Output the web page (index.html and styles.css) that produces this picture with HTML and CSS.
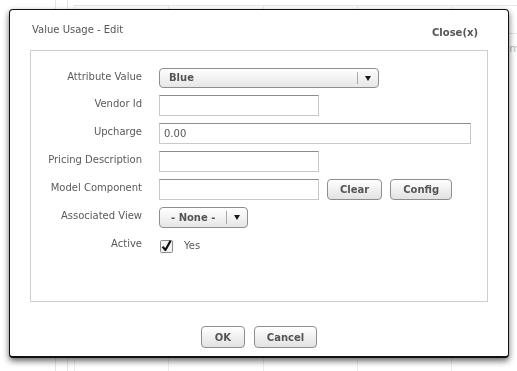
FILE: index.html
```html
<!DOCTYPE html>
<html lang="en">
<head>
    <meta charset="UTF-8">
    <title>Value Usage - Edit</title>
    <link rel="stylesheet" href="styles.css">
</head>
<body>
    <div class="page">
        <div class="side"></div>
        <div class="rail"></div>
        <div class="content">
            <table class="list">
                <tr class="list-head"><td></td><td></td><td></td><td></td><td></td></tr>
                <tr><td></td><td></td><td></td><td></td><td></td></tr>
                <tr class="tall"><td></td><td></td><td></td><td></td><td class="peek">m</td></tr>
            </table>
        </div>
    </div>

    <div class="modal">
        <div class="modal-head">
            <span class="modal-title">Value Usage - Edit</span>
            <a class="close">Close(x)</a>
        </div>
        <div class="panel">
            <div class="form">
                <label>Attribute Value</label>
                <div class="field">
                    <div class="select select-wide"><span class="select-text">Blue</span><span class="select-arrow"><i></i></span></div>
                </div>

                <label>Vendor Id</label>
                <div class="field"><input type="text" class="text"></div>

                <label>Upcharge</label>
                <div class="field"><input type="text" class="text text-wide" value="0.00"></div>

                <label>Pricing Description</label>
                <div class="field"><input type="text" class="text"></div>

                <label>Model Component</label>
                <div class="field">
                    <input type="text" class="text">
                    <button class="btn">Clear</button>
                    <button class="btn">Config</button>
                </div>

                <label>Associated View</label>
                <div class="field">
                    <div class="select select-small"><span class="select-text">- None -</span><span class="select-arrow"><i></i></span></div>
                </div>

                <label>Active</label>
                <div class="field">
                    <span class="check">
                        <svg width="14" height="14" viewBox="0 0 14 14">
                            <rect x="0.5" y="1.5" width="12" height="12" rx="1" fill="#f4f4f4" stroke="#8a8a8a"/>
                            <path d="M2.6 7.6 L5.4 11 L10.6 1.8" fill="none" stroke="#111" stroke-width="2.2" stroke-linejoin="round"/>
                        </svg>
                    </span>
                    <span class="check-label">Yes</span>
                </div>
            </div>
        </div>
        <div class="modal-foot">
            <button class="btn btn-ok">OK</button>
            <button class="btn">Cancel</button>
        </div>
    </div>
</body>
</html>
```

FILE: styles.css
```css
body {
    margin: 0;
    background-color: #fff;
    font-family: "DejaVu Sans", Verdana, sans-serif;
    font-size: 10px;
    color: #5a5a5a;
}
.page {
    display: flex;
    height: 371px;
    overflow: hidden;
}
.side {
    width: 55px;
    flex-shrink: 0;
    border-right: 1px solid #e4e4e4;
}
.rail {
    width: 11px;
    flex-shrink: 0;
    border-right: 1px solid #e4e4e4;
}
.content {
    flex-shrink: 0;
    width: 500px;
    padding-left: 6px;
}
.list {
    border-collapse: collapse;
    table-layout: fixed;
    width: 472px;
}
.list td {
    width: 94px;
    height: 27px;
    padding: 0;
    border-left: 1px solid #ececec;
    border-bottom: 1px solid #e6e6e6;
    color: #bbb;
    font-size: 11px;
    vertical-align: top;
}
.list-head td {
    height: 5px;
    border-left: none;
}
.list .tall td {
    height: 340px;
    border-bottom: none;
}
.list .peek {
    padding: 8px 0 0 57px;
}

.modal {
    position: fixed;
    left: 9px;
    top: 9px;
    width: 500px;
    height: 349px;
    box-sizing: border-box;
    background-color: #fff;
    border: 1px solid #111;
    border-bottom-width: 2px;
    border-radius: 4px;
    box-shadow: 0 3px 6px rgba(0, 0, 0, 0.6);
    display: flex;
    flex-direction: column;
}
.modal-head {
    display: flex;
    justify-content: space-between;
    align-items: flex-start;
    height: 40px;
    box-sizing: border-box;
    padding: 14px 30px 0 22px;
    line-height: 12px;
}
.modal-title {
    color: #555;
}
.close {
    margin-top: 3px;
    font-weight: bold;
    color: #555;
    cursor: pointer;
}
.panel {
    margin: 0 20px 0 20px;
    height: 252px;
    box-sizing: border-box;
    border: 1px solid #cfcfcf;
    padding-top: 17px;
}
.form {
    display: grid;
    grid-template-columns: 111px auto;
    column-gap: 17px;
    row-gap: 7px;
}
.form label {
    text-align: right;
    align-self: center;
    color: #5a5a5a;
    line-height: 12px;
    padding-bottom: 3px;
}
.field {
    display: flex;
    align-items: center;
    gap: 8px;
    height: 21px;
}
.field:first-of-type {
    height: 20px;
}
.text {
    width: 160px;
    height: 21px;
    box-sizing: border-box;
    margin: 0;
    padding: 0 4px;
    border: 1px solid #c9c9c9;
    border-top-color: #8c8c8c;
    border-radius: 0;
    font-family: "DejaVu Sans", Verdana, sans-serif;
    font-size: 10px;
    color: #555;
    background-color: #fff;
}
.text-wide {
    width: 312px;
}
.select {
    display: flex;
    height: 20px;
    box-sizing: border-box;
    border: 1px solid #8e8e8e;
    border-radius: 4px;
    background: linear-gradient(#ffffff, #e6e6e6);
    cursor: pointer;
}
.select-wide {
    width: 220px;
}
.select-small {
    width: 89px;
    height: 21px;
}
.select-text {
    flex: 1;
    padding-left: 9px;
    font-weight: bold;
    color: #555;
    line-height: 18px;
}
.select-small .select-text {
    padding-left: 11px;
    line-height: 19px;
}
.select-arrow {
    width: 20px;
    display: flex;
    align-items: center;
    justify-content: center;
    border-left: 1px solid #a8a8a8;
    margin: 3px 0;
}
.select-arrow i {
    width: 0;
    height: 0;
    border-left: 3px solid transparent;
    border-right: 3px solid transparent;
    border-top: 5px solid #1a1a1a;
}
.btn {
    height: 21px;
    margin: 0;
    padding: 0 12px;
    border: 1px solid #8e8e8e;
    border-radius: 4px;
    background: linear-gradient(#ffffff, #e2e2e2);
    font-family: "DejaVu Sans", Verdana, sans-serif;
    font-size: 10px;
    font-weight: bold;
    color: #555;
    cursor: pointer;
}
.check {
    display: flex;
    margin-left: 1px;
}
.check-label {
    margin-left: 2px;
    color: #5a5a5a;
}
.modal-foot {
    display: flex;
    justify-content: center;
    gap: 9px;
    padding-top: 24px;
}
.modal-foot .btn {
    height: 22px;
}
.btn-ok {
    min-width: 44px;
}
```
